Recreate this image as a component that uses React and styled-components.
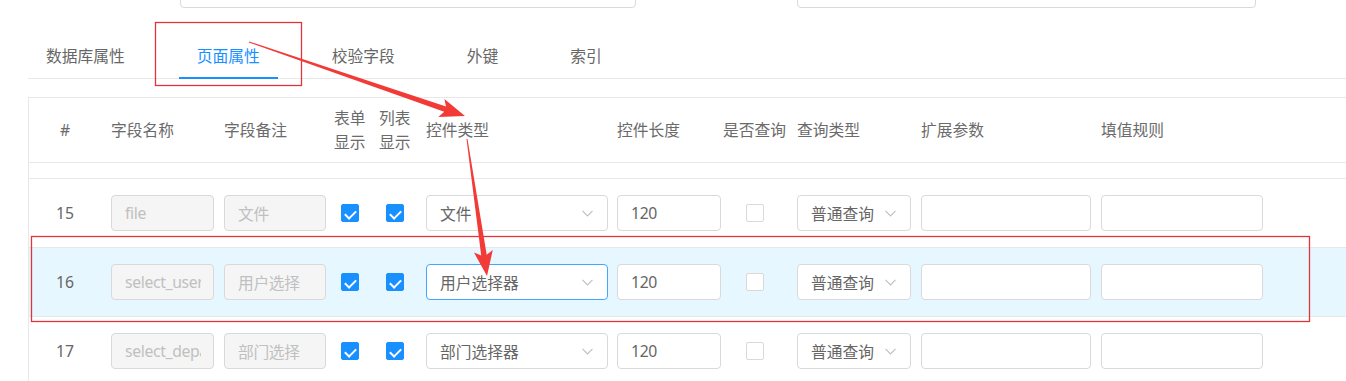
import React from 'react';
import styled, { createGlobalStyle } from 'styled-components';

const GlobalStyle = createGlobalStyle`
  html, body {
    margin: 0;
    padding: 0;
    background: #fff;
  }
  body {
    font-family: "Noto Sans", "Noto Sans CJK SC", sans-serif;
    font-size: 15.75px;
    color: #666;
  }
  * {
    box-sizing: border-box;
  }
`;

const Page = styled.div`
  position: relative;
  width: 1346px;
  height: 381px;
  overflow: hidden;
  padding-left: 28px;
`;

const TopRow = styled.div`
  display: flex;
  align-items: flex-end;
  gap: 161px;
  height: 8px;
  overflow: hidden;
  padding-left: 152px;
`;

const TopInput = styled.div`
  flex-shrink: 0;
  width: ${(p) => p.$w}px;
  height: 36px;
  border: 1px solid #d9d9d9;
  border-radius: 4px;
`;

const TabBar = styled.div`
  display: flex;
  margin-top: 22px;
  border-bottom: 1px solid #e8e8e8;
`;

const Tab = styled.div`
  position: relative;
  padding: 14px 18px 10px;
  margin-right: 36px;
  line-height: 24px;
  color: ${(p) => (p.$active ? '#1890ff' : '#666')};

  &::after {
    content: '';
    display: ${(p) => (p.$active ? 'block' : 'none')};
    position: absolute;
    left: 0;
    right: 0;
    bottom: -1px;
    height: 2.5px;
    background: #1890ff;
  }
`;

const cols = '82px 113px 110px 45px 47px 191px 106px 74px 124px 180px 1fr';

const Table = styled.div`
  margin-top: 18px;
  border-top: 1px solid #e8e8e8;
  border-left: 1px solid #e8e8e8;
`;

const HeadRow = styled.div`
  display: grid;
  grid-template-columns: ${cols};
  align-items: center;
  height: 65px;
  border-bottom: 1px solid #e8e8e8;
  line-height: 24px;
  color: #6b6b6b;
`;

const Cell = styled.div`
  display: flex;
  align-items: center;
  justify-content: ${(p) => (p.$center ? 'center' : 'flex-start')};
  width: ${(p) => (p.$w ? `${p.$w}px` : 'auto')};
  padding-right: ${(p) => p.$pr || 0}px;
  white-space: nowrap;
`;

const Spacer = styled.div`
  height: 16px;
  border-bottom: 1px solid #e8e8e8;
`;

const Row = styled.div`
  display: grid;
  grid-template-columns: ${cols};
  align-items: center;
  height: 69px;
  border-bottom: 1px solid #e8e8e8;
  background: ${(p) => (p.$hl ? '#e6f7ff' : '#fff')};
`;

const Input = styled.input`
  width: ${(p) => p.$w}px;
  height: 36px;
  padding: 0 12px 0 13px;
  border: 1px solid #d9d9d9;
  border-radius: 4px;
  background: #fff;
  font: inherit;
  letter-spacing: -0.35px;
  color: #666;
  outline: none;

  &:disabled {
    background: #f5f5f5;
    color: #c0c0c0;
  }
`;

const Select = styled.div`
  display: flex;
  align-items: center;
  justify-content: space-between;
  width: ${(p) => p.$w}px;
  height: 36px;
  padding: 0 14px 0 13px;
  border: 1px solid ${(p) => (p.$focus ? '#40a9ff' : '#d9d9d9')};
  border-radius: 4px;
  background: #fff;
  color: #666;
`;

const Check = styled.span`
  position: relative;
  display: inline-block;
  width: 18px;
  height: 18px;
  border: 1px solid ${(p) => (p.$on ? '#1890ff' : '#d9d9d9')};
  border-radius: 2px;
  background: ${(p) => (p.$on ? '#1890ff' : '#fff')};

  &::after {
    content: '';
    display: ${(p) => (p.$on ? 'block' : 'none')};
    position: absolute;
    left: 5px;
    top: 2.5px;
    width: 5px;
    height: 9px;
    border: 2px solid #fff;
    border-top: 0;
    border-left: 0;
    transform: rotate(45deg);
  }
`;

const Overlay = styled.svg`
  position: absolute;
  top: 0;
  left: 0;
  pointer-events: none;
`;

const Chevron = () => (
  <svg width="11" height="7" viewBox="0 0 11 7">
    <polyline points="0.5,0.8 5.5,6 10.5,0.8" fill="none" stroke="#bfbfbf" strokeWidth="1.1" />
  </svg>
);

// tapered screenshot-style arrow, computed from tail and tip
function arrow(x1, y1, x2, y2, headLen, headW, tailW, neckW) {
  const dx = x2 - x1;
  const dy = y2 - y1;
  const len = Math.hypot(dx, dy);
  const ux = dx / len;
  const uy = dy / len;
  const nx = -uy;
  const ny = ux;
  const bx = x2 - ux * headLen;
  const by = y2 - uy * headLen;
  const bbx = x2 - ux * (headLen + 4);
  const bby = y2 - uy * (headLen + 4);
  const pts = [
    [x1 + (nx * tailW) / 2, y1 + (ny * tailW) / 2],
    [bx + (nx * neckW) / 2, by + (ny * neckW) / 2],
    [bbx + nx * headW, bby + ny * headW],
    [x2, y2],
    [bbx - nx * headW, bby - ny * headW],
    [bx - (nx * neckW) / 2, by - (ny * neckW) / 2],
    [x1 - (nx * tailW) / 2, y1 - (ny * tailW) / 2],
  ];
  return pts.map((p) => p.map((v) => v.toFixed(1)).join(',')).join(' ');
}

const tabs = ['数据库属性', '页面属性', '校验字段', '外键', '索引'];

const rows = [
  { no: 15, name: 'file', remark: '文件', type: '文件' },
  { no: 16, name: 'select_user', remark: '用户选择', type: '用户选择器', hl: true },
  { no: 17, name: 'select_depart', remark: '部门选择', type: '部门选择器' },
];

export default function App() {
  return (
    <Page>
      <GlobalStyle />
      <TopRow>
        <TopInput $w={456} />
        <TopInput $w={459} />
      </TopRow>

      <TabBar>
        {tabs.map((t, i) => (
          <Tab key={t} $active={i === 1}>
            {t}
          </Tab>
        ))}
      </TabBar>

      <Table>
        <HeadRow>
          <Cell $center $pr={10}>#</Cell>
          <Cell>字段名称</Cell>
          <Cell>字段备注</Cell>
          <Cell>
            表单
            <br />
            显示
          </Cell>
          <Cell>
            列表
            <br />
            显示
          </Cell>
          <Cell>控件类型</Cell>
          <Cell>控件长度</Cell>
          <Cell>是否查询</Cell>
          <Cell>查询类型</Cell>
          <Cell>扩展参数</Cell>
          <Cell>填值规则</Cell>
        </HeadRow>
        <Spacer />
        {rows.map((r) => (
          <Row key={r.no} $hl={r.hl}>
            <Cell $center $pr={10}>{r.no}</Cell>
            <Cell>
              <Input $w={103} disabled defaultValue={r.name} />
            </Cell>
            <Cell>
              <Input $w={102} disabled defaultValue={r.remark} />
            </Cell>
            <Cell $center $w={32}>
              <Check $on />
            </Cell>
            <Cell $center $w={32}>
              <Check $on />
            </Cell>
            <Cell>
              <Select $w={182} $focus={r.hl}>
                {r.type}
                <Chevron />
              </Select>
            </Cell>
            <Cell>
              <Input $w={104} defaultValue="120" />
            </Cell>
            <Cell $center $w={63}>
              <Check />
            </Cell>
            <Cell>
              <Select $w={114}>
                普通查询
                <Chevron />
              </Select>
            </Cell>
            <Cell>
              <Input $w={170} defaultValue="" />
            </Cell>
            <Cell>
              <Input $w={162} defaultValue="" />
            </Cell>
          </Row>
        ))}
      </Table>

      <Overlay width="1346" height="381" viewBox="0 0 1346 381">
        <rect x="155.5" y="22.5" width="146" height="63" fill="none" stroke="#e0353b" strokeWidth="1.3" />
        <rect x="31.5" y="236.5" width="1278" height="85" fill="none" stroke="#e0353b" strokeWidth="1.3" />
        <polygon points={arrow(249, 42, 465, 116, 21, 9.5, 1, 5.5)} fill="#f23a36" />
        <polygon points={arrow(467, 139, 487, 276, 21, 9.5, 1, 5.5)} fill="#f23a36" />
      </Overlay>
    </Page>
  );
}
